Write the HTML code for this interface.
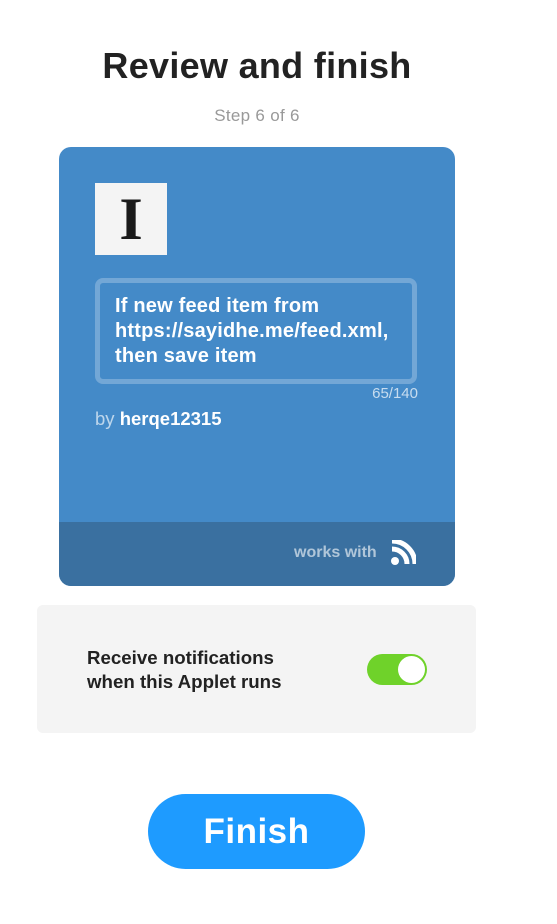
<!DOCTYPE html>
<html><head><style>
body{margin:0;width:557px;height:924px;background:#fff;font-family:"Liberation Sans",sans-serif;position:relative;overflow:hidden}
.a{position:absolute}
</style></head><body>
<div class="a" style="left:0;width:514px;top:45px;text-align:center;font-size:36px;font-weight:bold;color:#222;letter-spacing:0.3px">Review and finish</div>
<div class="a" style="left:0;width:514px;top:106px;text-align:center;font-size:17px;color:#999;letter-spacing:0.3px">Step 6 of 6</div>
<div class="a" style="left:59px;top:147px;width:396px;height:439px;background:#448ac8;border-radius:12px;overflow:hidden">
  <div class="a" style="left:36px;top:36px;width:72px;height:72px;background:#f4f4f4;font-family:'Liberation Serif',serif;font-weight:bold;font-size:60px;color:#1a1a1a;text-align:center;line-height:72px">I</div>
  <div class="a" style="left:36px;top:131px;width:312px;height:96px;border:5px solid rgba(255,255,255,0.25);border-radius:8px"></div>
  <div class="a" style="left:56px;top:147px;font-size:20px;font-weight:bold;color:#fff;line-height:25px;letter-spacing:0.2px">If new feed item from<br>https://sayidhe.me/feed.xml,<br>then save item</div>
  <div class="a" style="right:37px;top:238px;font-size:15px;color:rgba(255,255,255,0.7)">65/140</div>
  <div class="a" style="left:36px;top:261px;font-size:18.5px;color:rgba(255,255,255,0.65)">by <b style="color:#fff">herqe12315</b></div>
  <div class="a" style="left:0;top:375px;width:396px;height:64px;background:#3a70a0"></div>
  <div class="a" style="left:235px;top:397px;font-size:16px;font-weight:bold;color:rgba(255,255,255,0.6)">works with</div>
  <svg class="a" style="left:331px;top:393px" width="26" height="26" viewBox="0 0 26 26"><circle cx="5" cy="21" r="4" fill="#fff"/><path d="M2 9a15 15 0 0 1 15 15" stroke="#fff" stroke-width="5" fill="none"/><path d="M2 1a23 23 0 0 1 23 23" stroke="#fff" stroke-width="5" fill="none"/></svg>
</div>
<div class="a" style="left:37px;top:605px;width:439px;height:128px;background:#f4f4f4;border-radius:6px"></div>
<div class="a" style="left:87px;top:646px;font-size:18.7px;font-weight:bold;color:#222;line-height:24px">Receive notifications<br>when this Applet runs</div>
<div class="a" style="left:367px;top:654px;width:60px;height:31px;background:#6fd22a;border-radius:16px"><div class="a" style="right:2px;top:2px;width:27px;height:27px;border-radius:50%;background:#fff"></div></div>
<div class="a" style="left:148px;top:794px;width:217px;height:75px;background:#1e9bff;border-radius:38px;color:#fff;font-weight:bold;font-size:35px;text-align:center;line-height:75px;letter-spacing:0.5px">Finish</div>
</body></html>
